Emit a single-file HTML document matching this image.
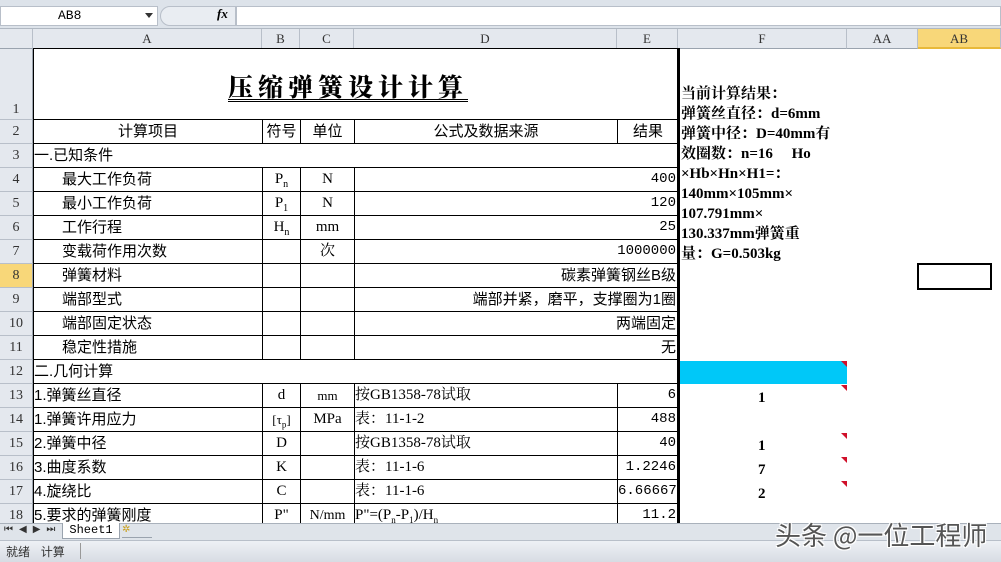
<!DOCTYPE html>
<html><head><meta charset="utf-8"><style>
*{margin:0;padding:0;box-sizing:border-box}
body{width:1001px;height:562px;overflow:hidden;background:#fff;position:relative;font-family:"Liberation Serif","Noto Serif CJK SC",serif;font-size:15px;color:#000}
.a{position:absolute}
.c{position:absolute;border-right:1px solid #000;border-bottom:1px solid #000;white-space:nowrap;overflow:hidden;line-height:23px;font-family:"Liberation Sans","Noto Sans CJK SC",sans-serif;font-size:15px}
.ser{font-family:"Liberation Serif","Noto Serif CJK SC",serif;text-align:center}
.r{text-align:right;padding-right:2px}
.mono{font-family:"Liberation Mono","Noto Sans CJK SC",monospace;font-size:14px}
.hd{position:absolute;top:29px;height:20px;background:#e4e8ee;border-right:1px solid #b8bfc9;border-bottom:1px solid #9aa3ae;text-align:center;font-size:13px;line-height:19px;color:#333;font-family:"Liberation Serif",serif}
.rh{position:absolute;left:0;width:33px;background:#e4e8ee;border-bottom:1px solid #b8bfc9;border-right:1px solid #9aa3ae;text-align:center;font-size:14px;color:#333;font-family:"Liberation Serif",serif}
.tri{position:absolute;width:0;height:0;border-top:6px solid #d0102a;border-left:6px solid transparent}
.fb{font-family:"Liberation Serif","Noto Serif CJK SC",serif;font-weight:bold;font-size:15px;line-height:20px}
</style></head><body>
<div class="a" style="left:0;top:0;width:1001px;height:29px;background:#dde3ea;border-bottom:1px solid #b0b8c2"></div>
<div class="a" style="left:0;top:6px;width:158px;height:20px;background:#fff;border:1px solid #b8bfc9;font-family:'Liberation Mono',monospace;font-size:13px;line-height:18px;padding-left:57px">AB8</div>
<div class="a" style="left:145px;top:13px;border-top:5px solid #333;border-left:4px solid transparent;border-right:4px solid transparent"></div>
<div class="a" style="left:160px;top:6px;width:76px;height:20px;background:#e9edf2;border:1px solid #b8bfc9;border-radius:10px 0 0 10px"></div>
<div class="a" style="left:217px;top:6px;font-style:italic;font-weight:bold;font-size:13px;font-family:'Liberation Serif',serif">fx</div>
<div class="a" style="left:236px;top:6px;width:765px;height:20px;background:#fff;border:1px solid #b8bfc9"></div>
<div class="hd" style="left:0;width:33px"></div>
<div class="hd" style="left:33px;width:229px">A</div>
<div class="hd" style="left:262px;width:38px">B</div>
<div class="hd" style="left:300px;width:54px">C</div>
<div class="hd" style="left:354px;width:263px">D</div>
<div class="hd" style="left:617px;width:61px">E</div>
<div class="hd" style="left:678px;width:169px">F</div>
<div class="hd" style="left:847px;width:71px">AA</div>
<div class="hd" style="left:918px;width:83px;background:#f8d779;border-bottom:2px solid #e8b93a">AB</div>
<div class="rh" style="top:49px;height:71px;line-height:122px">1</div>
<div class="rh" style="top:120px;height:24px;line-height:24px">2</div>
<div class="rh" style="top:144px;height:24px;line-height:24px">3</div>
<div class="rh" style="top:168px;height:24px;line-height:24px">4</div>
<div class="rh" style="top:192px;height:24px;line-height:24px">5</div>
<div class="rh" style="top:216px;height:24px;line-height:24px">6</div>
<div class="rh" style="top:240px;height:24px;line-height:24px">7</div>
<div class="rh" style="top:264px;height:24px;line-height:24px;background:#f8d779">8</div>
<div class="rh" style="top:288px;height:24px;line-height:24px">9</div>
<div class="rh" style="top:312px;height:24px;line-height:24px">10</div>
<div class="rh" style="top:336px;height:24px;line-height:24px">11</div>
<div class="rh" style="top:360px;height:24px;line-height:24px">12</div>
<div class="rh" style="top:384px;height:24px;line-height:24px">13</div>
<div class="rh" style="top:408px;height:24px;line-height:24px">14</div>
<div class="rh" style="top:432px;height:24px;line-height:24px">15</div>
<div class="rh" style="top:456px;height:24px;line-height:24px">16</div>
<div class="rh" style="top:480px;height:24px;line-height:24px">17</div>
<div class="rh" style="top:504px;height:24px;line-height:24px">18</div>
<div class="a" style="left:33px;top:48px;width:646px;height:480px;border-left:1px solid #000;border-top:1px solid #000"></div>
<div class="a" style="left:677px;top:48px;width:3px;height:476px;background:#000"></div>
<div class="a" style="left:34px;top:49px;width:643px;height:71px;border-bottom:1px solid #000"></div>
<div class="a" style="left:228px;top:66px;font-family:'Noto Serif CJK SC',serif;font-weight:900;font-size:25px;letter-spacing:5px;line-height:40px;border-bottom:3px double #000;height:36px">压缩弹簧设计计算</div>
<div class="c" style="left:34px;top:120px;width:229px;height:24px;text-align:center">计算项目</div>
<div class="c" style="left:263px;top:120px;width:38px;height:24px;text-align:center">符号</div>
<div class="c" style="left:301px;top:120px;width:54px;height:24px;text-align:center">单位</div>
<div class="c" style="left:355px;top:120px;width:263px;height:24px;text-align:center">公式及数据来源</div>
<div class="c" style="left:618px;top:120px;width:60px;height:24px;text-align:center;border-right:none">结果</div>
<div class="c" style="left:34px;top:144px;width:644px;height:24px;border-right:none">一.已知条件</div>
<div class="c" style="left:34px;top:168px;width:229px;height:24px;padding-left:28px">最大工作负荷</div>
<div class="c ser" style="left:263px;top:168px;width:38px;height:24px">P<sub style="font-size:10px">n</sub></div>
<div class="c ser" style="left:301px;top:168px;width:54px;height:24px">N</div>
<div class="c r mono" style="left:355px;top:168px;width:323px;height:24px;border-right:none">400</div>
<div class="c" style="left:34px;top:192px;width:229px;height:24px;padding-left:28px">最小工作负荷</div>
<div class="c ser" style="left:263px;top:192px;width:38px;height:24px">P<sub style="font-size:10px">1</sub></div>
<div class="c ser" style="left:301px;top:192px;width:54px;height:24px">N</div>
<div class="c r mono" style="left:355px;top:192px;width:323px;height:24px;border-right:none">120</div>
<div class="c" style="left:34px;top:216px;width:229px;height:24px;padding-left:28px">工作行程</div>
<div class="c ser" style="left:263px;top:216px;width:38px;height:24px">H<sub style="font-size:10px">n</sub></div>
<div class="c ser" style="left:301px;top:216px;width:54px;height:24px">mm</div>
<div class="c r mono" style="left:355px;top:216px;width:323px;height:24px;border-right:none">25</div>
<div class="c" style="left:34px;top:240px;width:229px;height:24px;padding-left:28px">变载荷作用次数</div>
<div class="c ser" style="left:263px;top:240px;width:38px;height:24px"></div>
<div class="c ser" style="left:301px;top:240px;width:54px;height:24px">次</div>
<div class="c r mono" style="left:355px;top:240px;width:323px;height:24px;border-right:none">1000000</div>
<div class="c" style="left:34px;top:264px;width:229px;height:24px;padding-left:28px">弹簧材料</div>
<div class="c" style="left:263px;top:264px;width:38px;height:24px"></div>
<div class="c" style="left:301px;top:264px;width:54px;height:24px"></div>
<div class="c r" style="left:355px;top:264px;width:323px;height:24px;border-right:none">碳素弹簧钢丝B级</div>
<div class="c" style="left:34px;top:288px;width:229px;height:24px;padding-left:28px">端部型式</div>
<div class="c" style="left:263px;top:288px;width:38px;height:24px"></div>
<div class="c" style="left:301px;top:288px;width:54px;height:24px"></div>
<div class="c r" style="left:355px;top:288px;width:323px;height:24px;border-right:none">端部并紧，磨平，支撑圈为1圈</div>
<div class="c" style="left:34px;top:312px;width:229px;height:24px;padding-left:28px">端部固定状态</div>
<div class="c" style="left:263px;top:312px;width:38px;height:24px"></div>
<div class="c" style="left:301px;top:312px;width:54px;height:24px"></div>
<div class="c r" style="left:355px;top:312px;width:323px;height:24px;border-right:none">两端固定</div>
<div class="c" style="left:34px;top:336px;width:229px;height:24px;padding-left:28px">稳定性措施</div>
<div class="c" style="left:263px;top:336px;width:38px;height:24px"></div>
<div class="c" style="left:301px;top:336px;width:54px;height:24px"></div>
<div class="c r" style="left:355px;top:336px;width:323px;height:24px;border-right:none">无</div>
<div class="c" style="left:34px;top:360px;width:644px;height:24px;border-right:none">二.几何计算</div>
<div class="c" style="left:34px;top:384px;width:229px;height:24px">1.弹簧丝直径</div>
<div class="c ser" style="left:263px;top:384px;width:38px;height:24px">d</div>
<div class="c ser" style="left:301px;top:384px;width:54px;height:24px;font-size:13px">mm</div>
<div class="c ser" style="left:355px;top:384px;width:263px;height:24px;text-align:left">按GB1358-78试取</div>
<div class="c r mono" style="left:618px;top:384px;width:60px;height:24px;border-right:none">6</div>
<div class="c" style="left:34px;top:408px;width:229px;height:24px">1.弹簧许用应力</div>
<div class="c ser" style="left:263px;top:408px;width:38px;height:24px;font-size:13px">[τ<sub style="font-size:9px">p</sub>]</div>
<div class="c ser" style="left:301px;top:408px;width:54px;height:24px">MPa</div>
<div class="c ser" style="left:355px;top:408px;width:263px;height:24px;text-align:left">表：11-1-2</div>
<div class="c r mono" style="left:618px;top:408px;width:60px;height:24px;border-right:none">488</div>
<div class="c" style="left:34px;top:432px;width:229px;height:24px">2.弹簧中径</div>
<div class="c ser" style="left:263px;top:432px;width:38px;height:24px">D</div>
<div class="c ser" style="left:301px;top:432px;width:54px;height:24px"></div>
<div class="c ser" style="left:355px;top:432px;width:263px;height:24px;text-align:left">按GB1358-78试取</div>
<div class="c r mono" style="left:618px;top:432px;width:60px;height:24px;border-right:none">40</div>
<div class="c" style="left:34px;top:456px;width:229px;height:24px">3.曲度系数</div>
<div class="c ser" style="left:263px;top:456px;width:38px;height:24px">K</div>
<div class="c ser" style="left:301px;top:456px;width:54px;height:24px"></div>
<div class="c ser" style="left:355px;top:456px;width:263px;height:24px;text-align:left">表：11-1-6</div>
<div class="c r mono" style="left:618px;top:456px;width:60px;height:24px;border-right:none">1.2246</div>
<div class="c" style="left:34px;top:480px;width:229px;height:24px">4.旋绕比</div>
<div class="c ser" style="left:263px;top:480px;width:38px;height:24px">C</div>
<div class="c ser" style="left:301px;top:480px;width:54px;height:24px"></div>
<div class="c ser" style="left:355px;top:480px;width:263px;height:24px;text-align:left">表：11-1-6</div>
<div class="c r mono" style="left:618px;top:480px;width:60px;height:24px;border-right:none">6.66667</div>
<div class="c" style="left:34px;top:504px;width:229px;height:24px">5.要求的弹簧刚度</div>
<div class="c ser" style="left:263px;top:504px;width:38px;height:24px">P"</div>
<div class="c ser" style="left:301px;top:504px;width:54px;height:24px;font-size:14px">N/mm</div>
<div class="c ser" style="left:355px;top:504px;width:263px;height:24px;text-align:left">P"=(P<sub style="font-size:9px">n</sub>-P<sub style="font-size:9px">1</sub>)/H<sub style="font-size:9px">n</sub></div>
<div class="c r mono" style="left:618px;top:504px;width:60px;height:24px;border-right:none">11.2</div>
<div class="a fb" style="left:681px;top:84px;width:165px;white-space:nowrap">当前计算结果：<br>弹簧丝直径：d=6mm<br>弹簧中径：D=40mm有<br>效圈数：n=16&nbsp;&nbsp;&nbsp;&nbsp;&nbsp;Ho<br>×Hb×Hn×H1=：<br>140mm×105mm×<br>107.791mm×<br>130.337mm弹簧重<br>量：G=0.503kg</div>
<div class="a" style="left:680px;top:361px;width:167px;height:23px;background:#00c8f8"></div>
<div class="tri" style="left:841px;top:361px"></div>
<div class="tri" style="left:841px;top:385px"></div>
<div class="tri" style="left:841px;top:433px"></div>
<div class="tri" style="left:841px;top:457px"></div>
<div class="tri" style="left:841px;top:481px"></div>
<div class="a fb" style="left:758px;top:388px">1</div>
<div class="a fb" style="left:758px;top:436px">1</div>
<div class="a fb" style="left:758px;top:460px">7</div>
<div class="a fb" style="left:758px;top:484px">2</div>
<div class="a" style="left:917px;top:263px;width:75px;height:27px;border:2px solid #000"></div>
<div class="a" style="left:0;top:523px;width:1001px;height:17px;background:#dfe4ea;border-top:1px solid #a9b1bb"></div>
<div class="a" style="left:4px;top:524px;font-size:10px;color:#333;letter-spacing:6px;font-family:'DejaVu Sans',sans-serif">⏮◀▶⏭</div>
<div class="a" style="left:62px;top:523px;width:58px;height:16px;background:#fff;border:1px solid #9aa3ae;border-top:none;font-family:'Liberation Mono',monospace;font-size:12px;text-align:center;line-height:15px">Sheet1</div>
<div class="a" style="left:122px;top:524px;width:30px;height:14px;border-bottom:1px solid #9aa3ae;font-size:10px;color:#c9a020">✲</div>
<div class="a" style="left:0;top:540px;width:1001px;height:22px;background:linear-gradient(#eef1f5,#d7dce3);border-top:1px solid #b8bfc9"></div>
<div class="a" style="left:6px;top:543px;font-family:'Noto Sans CJK SC',sans-serif;font-size:12px;color:#333">就绪&nbsp;&nbsp;&nbsp;&nbsp;计算</div>
<div class="a" style="left:80px;top:543px;width:1px;height:16px;background:#999"></div>
<div class="a" style="left:775px;top:516px;font-family:'Noto Sans CJK SC',sans-serif;font-size:26px;color:#555;text-shadow:0 0 2px #fff,1px 1px 0 #fff,-1px -1px 0 #fff,1px -1px 0 #fff,-1px 1px 0 #fff">头条 @一位工程师</div>
</body></html>
